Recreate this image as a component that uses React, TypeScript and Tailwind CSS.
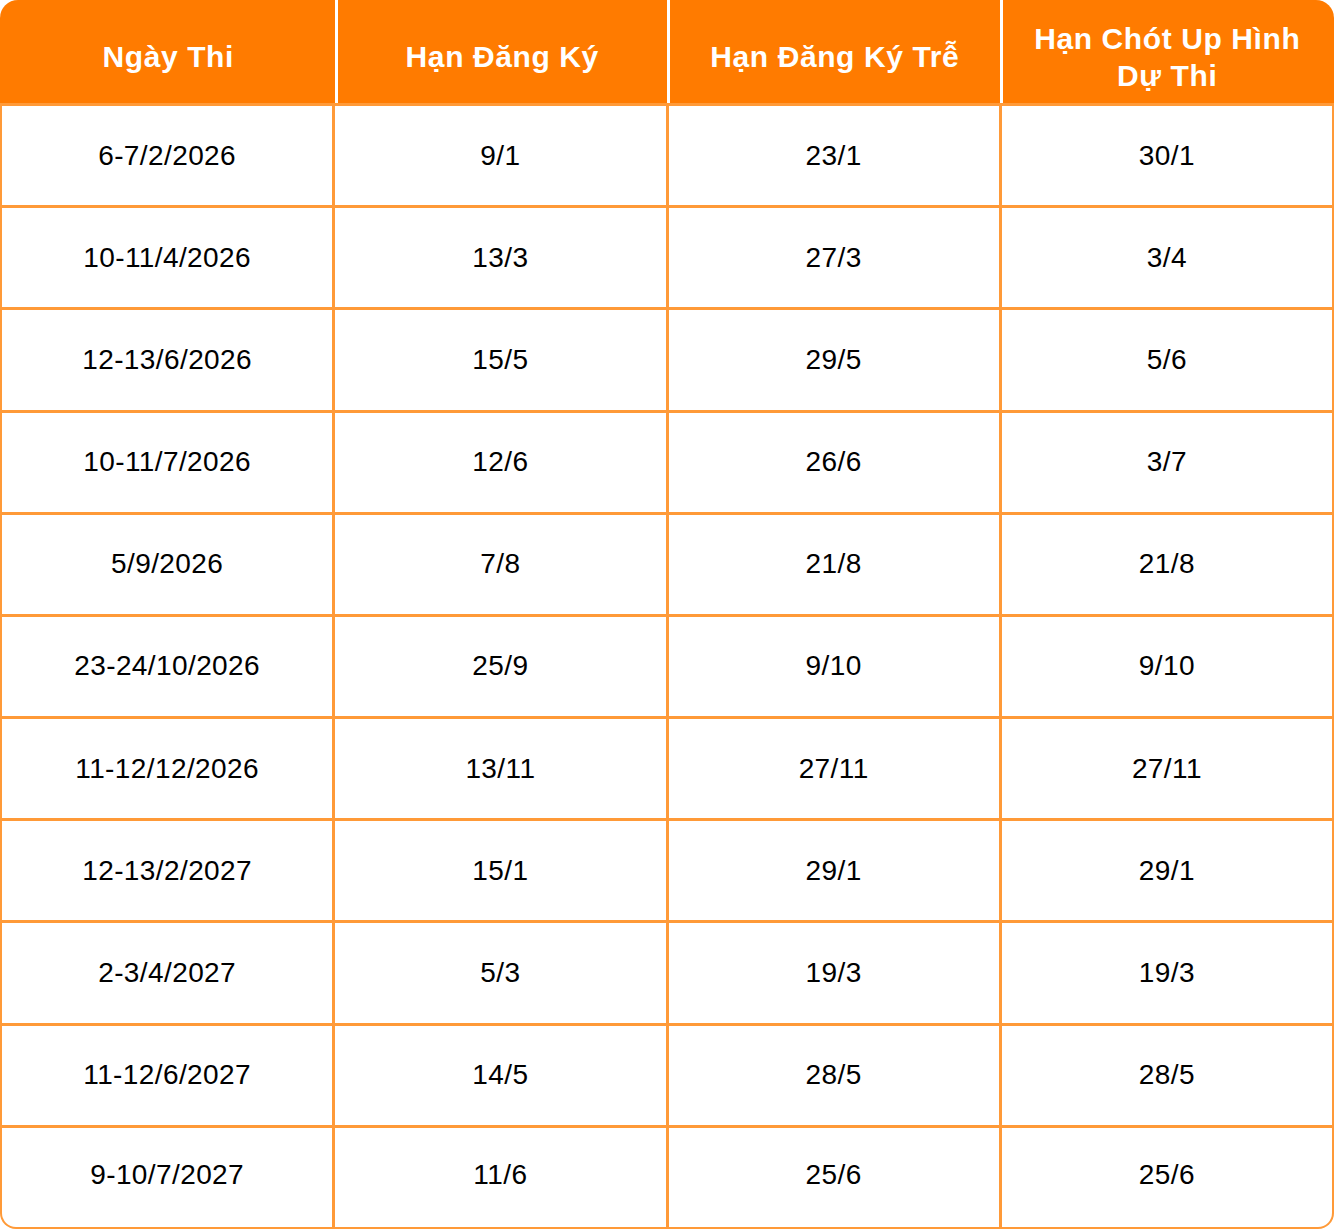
import React from "react";

const headers = ["Ngày Thi", "Hạn Đăng Ký", "Hạn Đăng Ký Trễ", "Hạn Chót Up Hình Dự Thi"];

const rows: string[][] = [
  ["6-7/2/2026", "9/1", "23/1", "30/1"],
  ["10-11/4/2026", "13/3", "27/3", "3/4"],
  ["12-13/6/2026", "15/5", "29/5", "5/6"],
  ["10-11/7/2026", "12/6", "26/6", "3/7"],
  ["5/9/2026", "7/8", "21/8", "21/8"],
  ["23-24/10/2026", "25/9", "9/10", "9/10"],
  ["11-12/12/2026", "13/11", "27/11", "27/11"],
  ["12-13/2/2027", "15/1", "29/1", "29/1"],
  ["2-3/4/2027", "5/3", "19/3", "19/3"],
  ["11-12/6/2027", "14/5", "28/5", "28/5"],
  ["9-10/7/2027", "11/6", "25/6", "25/6"],
];

export default function App() {
  return (
    <div className="w-[1334px] h-[1230px] bg-white font-['Liberation_Sans',Arial,sans-serif]">
      <div className="grid grid-cols-4 h-[103px] bg-[#ff7b00] rounded-t-[18px] px-[2px]">
        {headers.map((h, i) => (
          <div
            key={i}
            className={`flex items-center justify-center text-center text-white font-bold text-[30px] leading-[37px] tracking-[0.6px] px-[22px] pt-[10px] ${
              i > 0 ? "border-l-[3px] border-white" : ""
            }`}
          >
            {h}
          </div>
        ))}
      </div>
      <div className="grid grid-cols-4 grid-rows-11 gap-[3px] h-[1126px] bg-[#ff9a38] px-[2px] pt-[3px] pb-[2px] rounded-b-[16px]">
        {rows.map((r, ri) =>
          r.map((c, ci) => {
            const last = ri === rows.length - 1;
            const corner =
              last && ci === 0 ? "rounded-bl-[14px]" : last && ci === 3 ? "rounded-br-[14px]" : "";
            return (
              <div
                key={`${ri}-${ci}`}
                className={`bg-white flex items-center justify-center text-black text-[28px] tracking-[0.4px] ${
                  last ? "pb-[5px]" : ""
                } ${corner}`}
              >
                {c}
              </div>
            );
          })
        )}
      </div>
    </div>
  );
}
